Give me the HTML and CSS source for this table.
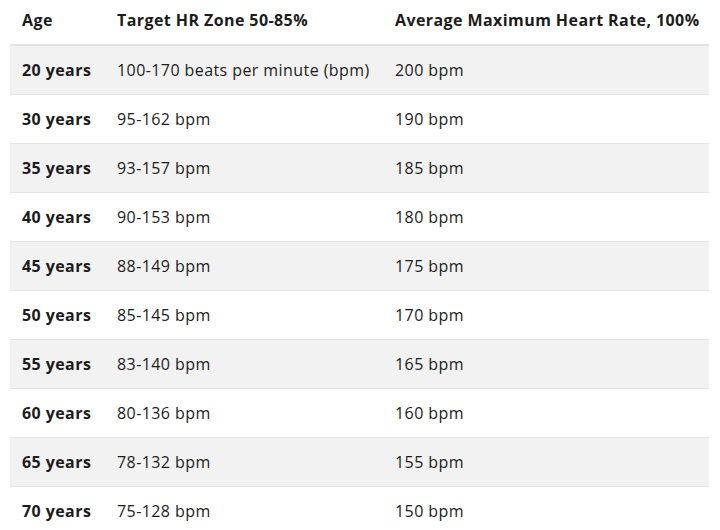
FILE: index.html
```html
<!DOCTYPE html>
<html>
<head>
<meta charset="utf-8">
<link rel="stylesheet" href="styles.css">
</head>
<body>
<table class="hr-table">
  <colgroup>
    <col class="c-age">
    <col class="c-zone">
    <col class="c-max">
  </colgroup>
  <thead>
    <tr><th>Age</th><th>Target HR Zone 50-85%</th><th>Average Maximum Heart Rate, 100%</th></tr>
  </thead>
  <tbody>
    <tr><th>20 years</th><td>100-170 beats per minute (bpm)</td><td>200 bpm</td></tr>
    <tr><th>30 years</th><td>95-162 bpm</td><td>190 bpm</td></tr>
    <tr><th>35 years</th><td>93-157 bpm</td><td>185 bpm</td></tr>
    <tr><th>40 years</th><td>90-153 bpm</td><td>180 bpm</td></tr>
    <tr><th>45 years</th><td>88-149 bpm</td><td>175 bpm</td></tr>
    <tr><th>50 years</th><td>85-145 bpm</td><td>170 bpm</td></tr>
    <tr><th>55 years</th><td>83-140 bpm</td><td>165 bpm</td></tr>
    <tr><th>60 years</th><td>80-136 bpm</td><td>160 bpm</td></tr>
    <tr><th>65 years</th><td>78-132 bpm</td><td>155 bpm</td></tr>
    <tr><th>70 years</th><td>75-128 bpm</td><td>150 bpm</td></tr>
  </tbody>
</table>
</body>
</html>
```
FILE: styles.css
```css
html, body {
  margin: 0;
  padding: 0;
  background: #ffffff;
}
body {
  padding: 0 10px;
  font-family: "Open Sans", "DejaVu Sans", sans-serif;
  color: #1c1c1c;
}
.hr-table {
  width: 699px;
  border-collapse: collapse;
  table-layout: fixed;
  font-size: 16px;
  letter-spacing: 0.42px;
}
.c-age { width: 95px; }
.c-zone { width: 278px; }
.c-max { width: 326px; }
.hr-table th,
.hr-table td {
  text-align: left;
  padding: 0 0 0 12px;
  white-space: nowrap;
  vertical-align: middle;
}
.hr-table thead th {
  height: 40px;
  padding-bottom: 4px;
  font-weight: 700;
  border-bottom: 2px solid #e2e2e2;
}
.hr-table tbody tr {
  height: 49px;
  border-bottom: 1px solid #e4e4e4;
}
.hr-table tbody th {
  font-weight: 700;
}
.hr-table tbody td {
  font-weight: 400;
}
.hr-table tbody tr:nth-child(odd) {
  background: #f2f2f2;
}
```
